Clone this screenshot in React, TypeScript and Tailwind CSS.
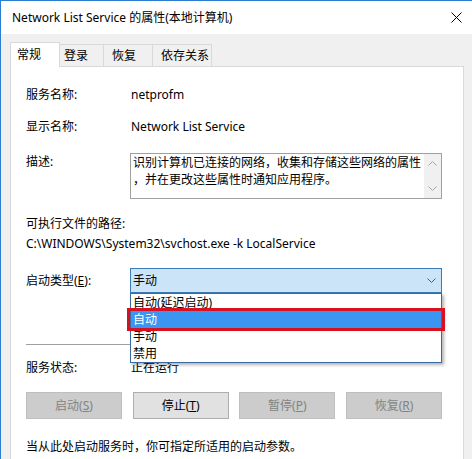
export default function App() {
  return (
    <div className="w-[472px] h-[459px] overflow-hidden bg-[#f0f0f0] border-l border-t border-[#2b7cd3] text-[12px] text-black font-['Noto_Sans','Noto_Sans_CJK_SC',sans-serif]">
      {/* title bar */}
      <div className="h-[33px] bg-white flex items-center justify-between pl-[11px] pr-[10px]">
        <span>Network List Service 的属性(本地计算机)</span>
        <svg width="11" height="11" viewBox="0 0 11 11">
          <path d="M0.5 0.5 L10.5 10.5 M10.5 0.5 L0.5 10.5" stroke="#000" strokeWidth="1" />
        </svg>
      </div>

      {/* tabs */}
      <div className="mt-[8px] ml-[9px] flex items-end h-[24px]">
        <div className="relative z-10 -mb-px h-[25px] w-[50px] bg-white border border-b-0 border-[#d9d9d9] pl-[6px] flex items-center">
          常规
        </div>
        <div className="h-[22px] w-[44px] border-t border-r border-[#d9d9d9] pl-[4px] flex items-center">登录</div>
        <div className="h-[22px] w-[49px] border-t border-r border-[#d9d9d9] pl-[8px] flex items-center">恢复</div>
        <div className="h-[22px] w-[59px] border-t border-r border-[#d9d9d9] pl-[8px] flex items-center">依存关系</div>
      </div>

      {/* panel */}
      <div className="ml-[9px] w-[454px] h-[420px] bg-white border border-[#d9d9d9] pl-[15px]">
        <div className="mt-[18px] h-[20px] flex items-center">
          <span className="w-[105px]">服务名称:</span>
          <span>netprofm</span>
        </div>
        <div className="mt-[12px] h-[20px] flex items-center">
          <span className="w-[105px]">显示名称:</span>
          <span>Network List Service</span>
        </div>

        <div className="mt-[16px] flex items-start">
          <span className="w-[104px] h-[18px] leading-[18px]">描述:</span>
          <div className="w-[312px] h-[46px] border border-[#a0a0a0] flex">
            <div className="flex-1 pl-[2px] leading-[17px]">
              <div>识别计算机已连接的网络，收集和存储这些网络的属性</div>
              <div>，并在更改这些属性时通知应用程序。</div>
            </div>
            <div className="w-[17px] bg-[#f0f0f0] flex flex-col justify-between items-center py-[7px]">
              <svg width="9" height="5" viewBox="0 0 9 5">
                <path d="M0.5 4.5 L4.5 0.5 L8.5 4.5" fill="none" stroke="#a6a6a6" strokeWidth="1" />
              </svg>
              <svg width="9" height="5" viewBox="0 0 9 5">
                <path d="M0.5 0.5 L4.5 4.5 L8.5 0.5" fill="none" stroke="#a6a6a6" strokeWidth="1" />
              </svg>
            </div>
          </div>
        </div>

        <div className="mt-[15px] h-[20px] flex items-center">可执行文件的路径:</div>
        <div className="h-[20px] flex items-center">C:\WINDOWS\System32\svchost.exe -k LocalService</div>

        {/* startup type combo */}
        <div className="mt-[14px] flex items-center">
          <span className="w-[104px]">
            启动类型(<u>E</u>):
          </span>
          <div className="relative w-[312px] h-[25px] border border-[#3d7bb6] bg-[#cce4f7] flex items-center justify-between pl-[2px] pr-[5px]">
            <span>手动</span>
            <svg width="9" height="5" viewBox="0 0 9 5">
              <path d="M0.5 0.5 L4.5 4.5 L8.5 0.5" fill="none" stroke="#5a5a5a" strokeWidth="1" />
            </svg>

            <div className="absolute z-20 left-[-1px] top-[24px] w-[312px] bg-white border border-[#3a6aa0] shadow-[2px_2px_3px_rgba(0,0,0,0.3)]">
              <div className="h-[17px] leading-[17px] pl-[2px]">自动(延迟启动)</div>
              <div className="relative h-[17px] leading-[17px] pl-[2px] bg-[#3a96f0] text-white">
                自动
                <div className="absolute -top-[3px] -bottom-[3px] -left-[4px] -right-[4px] border-[3px] border-[#d7111f]" />
              </div>
              <div className="h-[17px] leading-[17px] pl-[2px]">手动</div>
              <div className="h-[17px] leading-[17px] pl-[2px]">禁用</div>
            </div>
          </div>
        </div>

        <div className="mt-[51px] h-px w-[416px] bg-[#a0a0a0]" />

        <div className="mt-[13px] h-[20px] flex items-center">
          <span className="w-[105px]">服务状态:</span>
          <span>正在运行</span>
        </div>

        <div className="mt-[14px] w-[416px] flex justify-between">
          <div className="w-[96px] h-[27px] bg-[#cccccc] border border-[#bfbfbf] text-[#838383] flex items-center justify-center">
            启动(<u>S</u>)
          </div>
          <div className="w-[96px] h-[27px] bg-[#e1e1e1] border border-[#adadad] flex items-center justify-center">
            停止(<u>T</u>)
          </div>
          <div className="w-[96px] h-[27px] bg-[#cccccc] border border-[#bfbfbf] text-[#838383] flex items-center justify-center">
            暂停(<u>P</u>)
          </div>
          <div className="w-[96px] h-[27px] bg-[#cccccc] border border-[#bfbfbf] text-[#838383] flex items-center justify-center">
            恢复(<u>R</u>)
          </div>
        </div>

        <div className="mt-[18px] h-[20px] flex items-center">当从此处启动服务时，你可指定所适用的启动参数。</div>
      </div>
    </div>
  );
}
